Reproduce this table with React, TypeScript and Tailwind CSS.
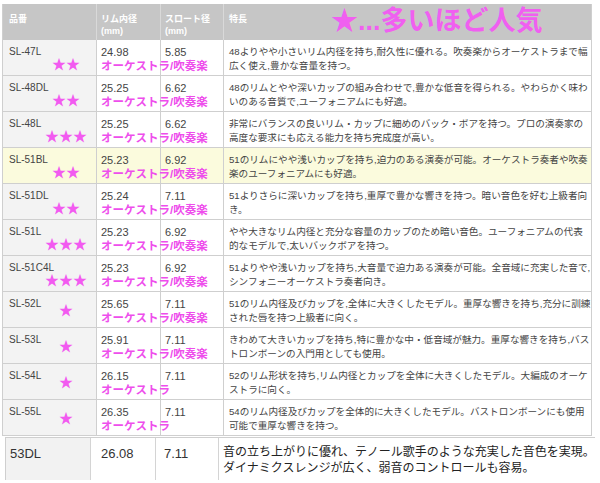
type Model = {
  name: string
  rim: string
  throat: string
  use: string
  stars: number
  lines: [string, string]
  hl?: boolean
}

const BOTH = 'オーケストラ/吹奏楽'

const models: Model[] = [
  { name: 'SL-47L', rim: '24.98', throat: '5.85', use: BOTH, stars: 2, lines: ['48よりやや小さいリム内径を持ち,耐久性に優れる。吹奏楽からオーケストラまで幅', '広く使え,豊かな音量を持つ。'] },
  { name: 'SL-48DL', rim: '25.25', throat: '6.62', use: BOTH, stars: 2, lines: ['48のリムとやや深いカップの組み合わせで,豊かな低音を得られる。やわらかく味わ', 'いのある音質で,ユーフォニアムにも好適。'] },
  { name: 'SL-48L', rim: '25.25', throat: '6.62', use: BOTH, stars: 3, lines: ['非常にバランスの良いリム・カップに細めのバック・ボアを持つ。プロの演奏家の', '高度な要求にも応える能力を持ち完成度が高い。'] },
  { name: 'SL-51BL', rim: '25.23', throat: '6.92', use: BOTH, stars: 2, hl: true, lines: ['51のリムにやや浅いカップを持ち,迫力のある演奏が可能。オーケストラ奏者や吹奏', '楽のユーフォニアムにも好適。'] },
  { name: 'SL-51DL', rim: '25.24', throat: '7.11', use: BOTH, stars: 2, lines: ['51よりさらに深いカップを持ち,重厚で豊かな響きを持つ。暗い音色を好む上級者向', 'き。'] },
  { name: 'SL-51L', rim: '25.23', throat: '6.92', use: BOTH, stars: 3, lines: ['やや大きなリム内径と充分な容量のカップのため暗い音色。ユーフォニアムの代表', '的なモデルで,太いバックボアを持つ。'] },
  { name: 'SL-51C4L', rim: '25.23', throat: '6.92', use: BOTH, stars: 3, lines: ['51よりやや浅いカップを持ち,大音量で迫力ある演奏が可能。全音域に充実した音で,', 'シンフォニーオーケストラ奏者向き。'] },
  { name: 'SL-52L', rim: '25.65', throat: '7.11', use: BOTH, stars: 1, lines: ['51のリム内径及びカップを,全体に大きくしたモデル。重厚な響きを持ち,充分に訓練', 'された唇を持つ上級者に向く。'] },
  { name: 'SL-53L', rim: '25.91', throat: '7.11', use: BOTH, stars: 1, lines: ['きわめて大きいカップを持ち,特に豊かな中・低音域が魅力。重厚な響きを持ち,バス', 'トロンボーンの入門用としても使用。'] },
  { name: 'SL-54L', rim: '26.15', throat: '7.11', use: 'オーケストラ', stars: 1, lines: ['52のリム形状を持ち,リム内径とカップを全体に大きくしたモデル。大編成のオーケ', 'ストラに向く。'] },
  { name: 'SL-55L', rim: '26.35', throat: '7.11', use: 'オーケストラ', stars: 1, lines: ['54のリム内径及びカップを全体的に大きくしたモデル。バストロンボーンにも使用', '可能で重厚な響きを持つ。'] },
]

function Row({ m }: { m: Model }) {
  return (
    <div
      className={`grid h-[36px] grid-cols-[94px_64px_63px_368px] border-b border-[#cfcfcf] ${m.hl ? 'bg-[#fbfbdd]' : 'bg-white'}`}
    >
      <div className={`border-r border-[#cfcfcf] pl-[6px] pt-[5px] ${m.hl ? '' : 'bg-[#f3f3f3]'}`}>
        <div className="text-[10px] leading-[14px] text-[#444]">{m.name}</div>
        <div
          className={`ml-[35px] w-[44px] text-center text-[14px] leading-[13px] text-[#f25af0] ${m.stars === 1 ? '-mt-[7px]' : '-mt-[1px]'}`}
        >
          {'★'.repeat(m.stars)}
        </div>
      </div>
      <div className="border-r border-[#cfcfcf] pl-[4px] pt-[5px]">
        <div className="text-[11px] leading-[14px] text-[#444]">{m.rim}</div>
        <div className="whitespace-nowrap text-[11.5px] font-bold leading-[14px] text-[#ee4eec]">{m.use}</div>
      </div>
      <div className="border-r border-[#cfcfcf] pl-[4px] pt-[5px]">
        <div className="text-[11px] leading-[14px] text-[#444]">{m.throat}</div>
      </div>
      <div className="whitespace-nowrap pl-[5px] pt-[5px] text-[9.6px] leading-[14px] text-[#444]">
        <div>{m.lines[0]}</div>
        <div>{m.lines[1]}</div>
      </div>
    </div>
  )
}

export default function App() {
  return (
    <div
      className="h-[483px] w-[600px] overflow-hidden bg-white pt-[4px]"
      style={{ fontFamily: '"Liberation Sans", "Noto Sans CJK JP", sans-serif' }}
    >
      <div className="ml-[2px] w-[590px] border-x border-[#cfcfcf]">
        <div className="grid h-[36px] grid-cols-[94px_64px_63px_368px] bg-[#c6c6c6] text-[9px] font-bold leading-[12px] text-white">
          <div className="border-r border-[#d9d9d9] pl-[6px] pt-[9px]">品番</div>
          <div className="border-r border-[#d9d9d9] pl-[4px] pt-[9px]">
            <div>リム内径</div>
            <div>(mm)</div>
          </div>
          <div className="border-r border-[#d9d9d9] pl-[4px] pt-[9px]">
            <div>スロート径</div>
            <div>(mm)</div>
          </div>
          <div className="flex items-start pl-[5px]">
            <span className="pt-[9px]">特長</span>
            <span className="ml-[84px] whitespace-nowrap text-[27px] font-bold leading-[34px] text-[#f05ff0]">
              ★...多いほど人気
            </span>
          </div>
        </div>
        {models.map((m) => (
          <Row key={m.name} m={m} />
        ))}
      </div>
      <div className="ml-[5px] mt-[1px] grid h-[43px] w-[590px] grid-cols-[85px_65px_63px_377px] border-t border-l border-[#cfcfcf] bg-white text-[#333]">
        <div className="border-r border-[#d4d4d4] bg-[#f2f2f2] pl-[4px] pt-[8px] text-[13px] leading-[16px]">53DL</div>
        <div className="border-r border-[#d4d4d4] pl-[10px] pt-[8px] text-[13px] leading-[16px]">26.08</div>
        <div className="border-r border-[#d4d4d4] pl-[8px] pt-[8px] text-[13px] leading-[16px]">7.11</div>
        <div className="whitespace-nowrap pl-[4px] pt-[6px] text-[12px] leading-[16px] text-[#222]">
          <div>音の立ち上がりに優れ、テノール歌手のような充実した音色を実現。</div>
          <div>ダイナミクスレンジが広く、弱音のコントロールも容易。</div>
        </div>
      </div>
    </div>
  )
}
